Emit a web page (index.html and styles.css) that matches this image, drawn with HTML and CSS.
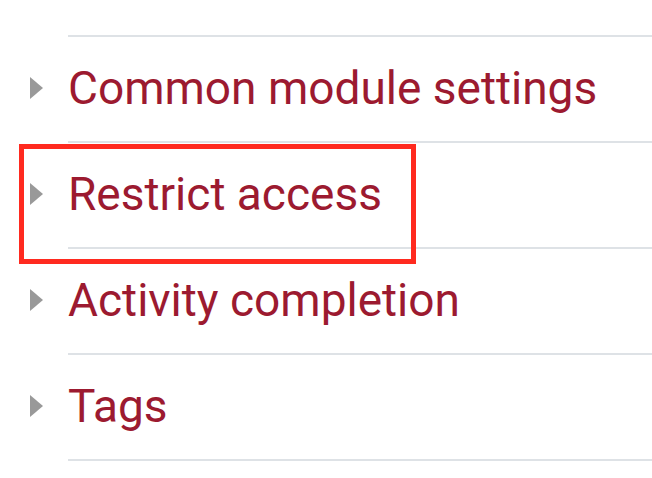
FILE: index.html
```html
<!DOCTYPE html>
<html lang="en">
<head>
    <meta charset="UTF-8">
    <meta name="viewport" content="width=device-width, initial-scale=1.0">
    <title>Activity settings</title>
    <link rel="stylesheet" href="styles.css">
</head>
<body>
    <div class="sections">
        <div class="section">
            <span class="caret"></span>
            <a class="title" href="#">Grade</a>
        </div>
        <div class="section">
            <span class="caret"></span>
            <a class="title" href="#">Common module settings</a>
        </div>
        <div class="section highlight">
            <span class="caret"></span>
            <a class="title" href="#">Restrict access</a>
        </div>
        <div class="section">
            <span class="caret"></span>
            <a class="title" href="#">Activity completion</a>
        </div>
        <div class="section">
            <span class="caret"></span>
            <a class="title" href="#">Tags</a>
        </div>
    </div>
</body>
</html>
```

FILE: styles.css
```css
html {
    font-family: Roboto, 'Liberation Sans', sans-serif;
}
body {
    margin: 0;
    overflow: hidden;
}
.sections {
    margin-top: -69px;
}
.section {
    display: flex;
    align-items: stretch;
    position: relative;
}
.caret {
    width: 68px;
    display: flex;
    align-items: center;
    padding-left: 30px;
    box-sizing: border-box;
}
.caret::before {
    content: '';
    display: block;
    width: 0;
    height: 0;
    border-left: 13px solid #999;
    border-top: 11px solid transparent;
    border-bottom: 11px solid transparent;
    margin-top: -4px;
}
.title {
    flex: 1;
    height: 106px;
    display: flex;
    align-items: center;
    border-bottom: 2px solid #dee2e6;
    color: #9c1a30;
    text-decoration: none;
    font-size: 46px;
    padding-bottom: 2px;
    box-sizing: border-box;
}
.highlight::after {
    content: '';
    position: absolute;
    left: 19px;
    top: 1px;
    width: 397px;
    height: 120px;
    border: 5px solid #ff2a1f;
    box-sizing: border-box;
}
```
